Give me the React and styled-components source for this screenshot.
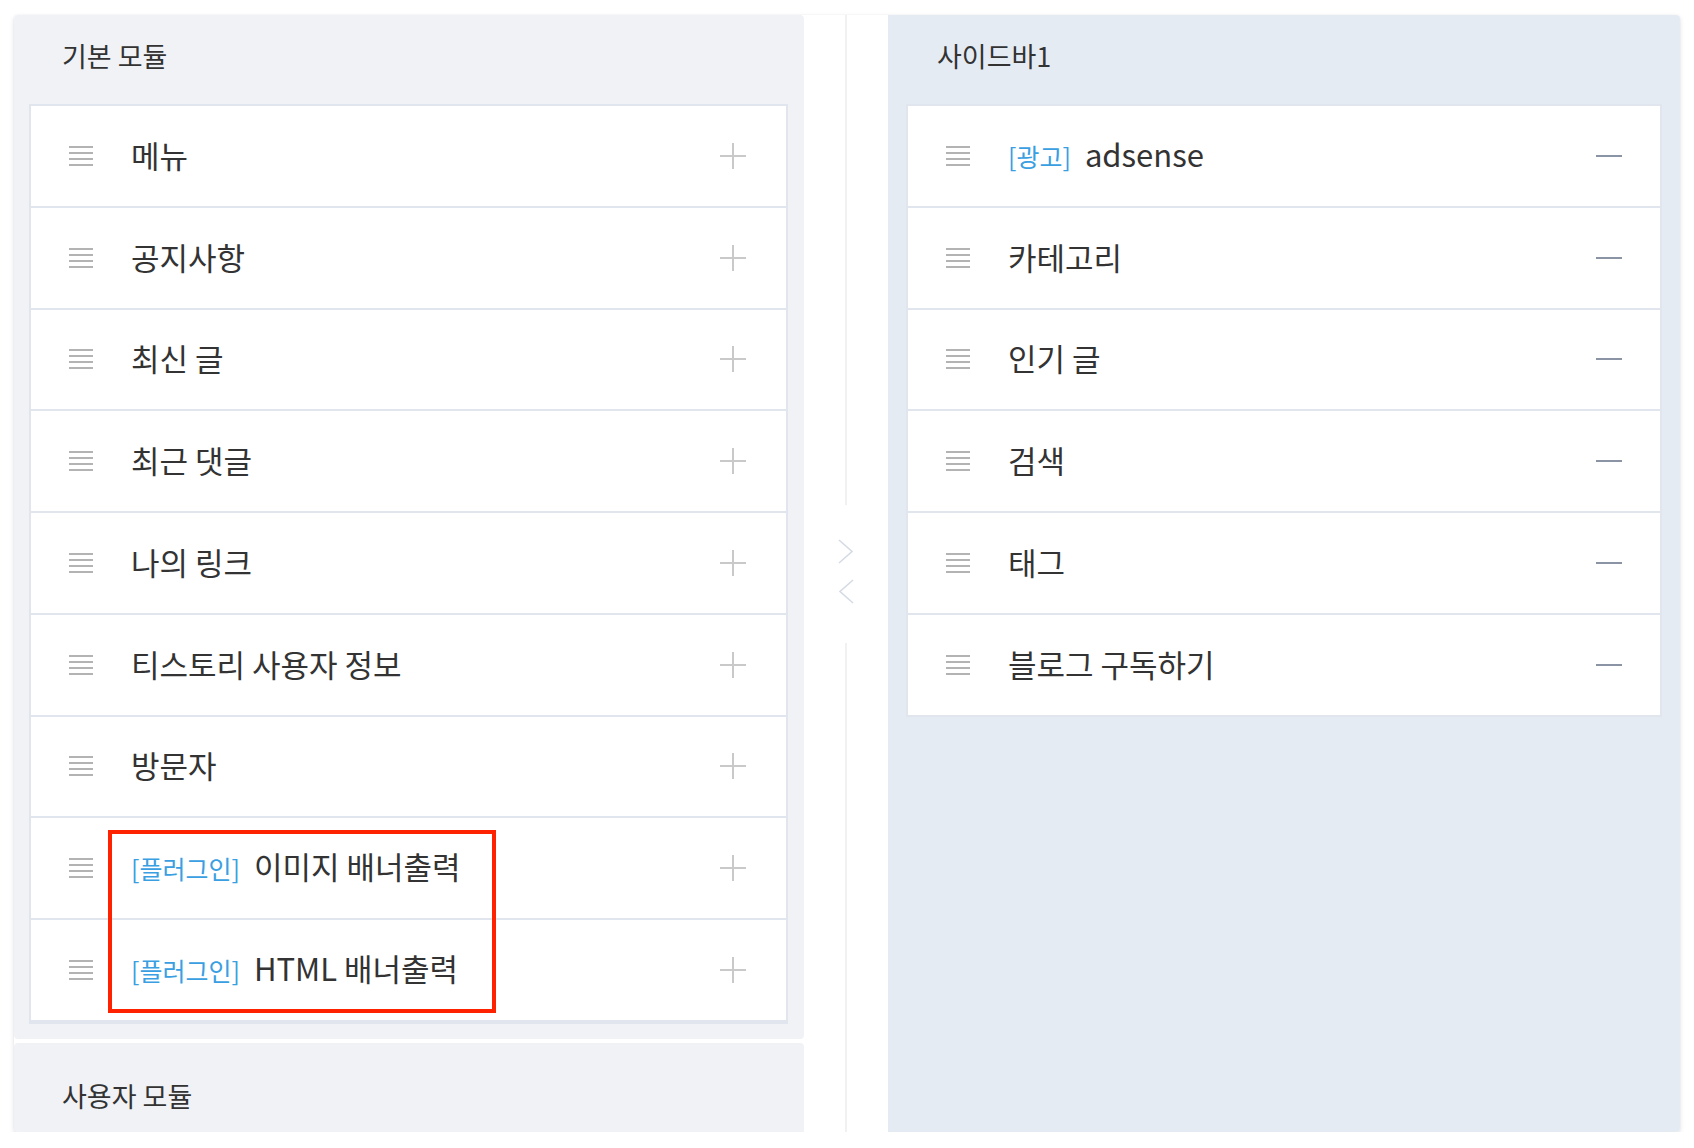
import React from 'react';
import styled, { createGlobalStyle } from 'styled-components';

const basicModules = [
  { label: '메뉴' },
  { label: '공지사항' },
  { label: '최신 글' },
  { label: '최근 댓글' },
  { label: '나의 링크' },
  { label: '티스토리 사용자 정보' },
  { label: '방문자' },
];

const pluginModules = [
  { tag: '플러그인', label: '이미지 배너출력' },
  { tag: '플러그인', label: 'HTML 배너출력' },
];

const sidebarModules = [
  { tag: '광고', label: 'adsense' },
  { label: '카테고리' },
  { label: '인기 글' },
  { label: '검색' },
  { label: '태그' },
  { label: '블로그 구독하기' },
];

const GripIcon = () => (
  <Grip width="24" height="20" viewBox="0 0 24 20">
    {[1, 7, 13, 19].map((y) => (
      <line key={y} x1="0" x2="24" y1={y} y2={y} stroke="#b3b3b3" strokeWidth="2" />
    ))}
  </Grip>
);

const PlusIcon = () => (
  <svg width="26" height="26" viewBox="0 0 26 26">
    <line x1="0" x2="26" y1="13" y2="13" stroke="#c9c9c9" strokeWidth="2" />
    <line x1="13" x2="13" y1="0" y2="26" stroke="#c9c9c9" strokeWidth="2" />
  </svg>
);

const MinusIcon = () => (
  <svg width="26" height="26" viewBox="0 0 26 26">
    <line x1="0" x2="26" y1="13" y2="13" stroke="#8a94a5" strokeWidth="2" />
  </svg>
);

const Row = ({ item, added }) => (
  <ModuleRow $added={added}>
    <GripIcon />
    <Label>
      {item.tag && <Tag>[{item.tag}]</Tag>}
      {item.label}
    </Label>
    <Action>{added ? <MinusIcon /> : <PlusIcon />}</Action>
  </ModuleRow>
);

const App = () => {
  return (
    <>
      <GlobalStyle />
      <Board>
        <LeftColumn>
          <Panel>
            <PanelTitle>기본 모듈</PanelTitle>
            <ModuleList>
              {basicModules.map((item) => (
                <Row key={item.label} item={item} />
              ))}
              <Highlighted>
                {pluginModules.map((item) => (
                  <Row key={item.label} item={item} />
                ))}
                <HighlightBox />
              </Highlighted>
            </ModuleList>
          </Panel>
          <Panel $grow>
            <PanelTitle $lower>사용자 모듈</PanelTitle>
          </Panel>
        </LeftColumn>

        <Gutter>
          <GutterLine />
          <Arrows>
            <svg width="16" height="25" viewBox="0 0 16 25">
              <polyline points="1,1 14,12.5 1,24" fill="none" stroke="#d4dbe5" strokeWidth="1.6" />
            </svg>
            <svg width="16" height="25" viewBox="0 0 16 25">
              <polyline points="15,1 2,12.5 15,24" fill="none" stroke="#d4dbe5" strokeWidth="1.6" />
            </svg>
          </Arrows>
          <GutterLine />
        </Gutter>

        <SidebarPanel>
          <PanelTitle $right>사이드바1</PanelTitle>
          <ModuleList>
            {sidebarModules.map((item) => (
              <Row key={item.label} item={item} added />
            ))}
          </ModuleList>
        </SidebarPanel>
      </Board>
    </>
  );
};

export default App;

const GlobalStyle = createGlobalStyle`
  body {
    margin: 0;
    background: #ffffff;
    font-family: 'Noto Sans CJK KR', 'Noto Sans', sans-serif;
    color: #333333;
  }
`;

const Board = styled.div`
  display: flex;
  width: 1666px;
  height: 1117px;
  margin: 15px 0 0 14px;
  overflow: hidden;
  border-radius: 4px;
  background: #ffffff;
  box-shadow: 0 2px 5px rgba(0, 0, 0, 0.12), 0 0 2px rgba(0, 0, 0, 0.06);
`;

const LeftColumn = styled.div`
  width: 790px;
  display: flex;
  flex-direction: column;
  gap: 4px;
  flex-shrink: 0;
`;

const Panel = styled.section`
  background-color: #f0f2f6;
  border-radius: 4px;
  padding: 0 16px 15px 15px;
  flex: ${(p) => (p.$grow ? '1' : 'none')};
`;

const PanelTitle = styled.h2`
  margin: 0;
  height: ${(p) => (p.$lower ? '108px' : '89px')};
  padding: ${(p) => (p.$lower ? '37px 0 0' : '25px 0 0')};
  padding-left: ${(p) => (p.$right ? '31px' : '33px')};
  box-sizing: border-box;
  font-size: 27px;
  line-height: 32px;
  font-weight: 400;
  color: #333333;
`;

const ModuleList = styled.div`
  background: #ffffff;
  border: 2px solid #e1e6ee;
  display: flex;
  flex-direction: column;
`;

const ModuleRow = styled.div`
  display: flex;
  align-items: center;
  height: 99.78px;
  padding: 0 ${(p) => (p.$added ? '38px' : '40px')} 0 38px;
  border-bottom: 2px solid #e1e6ee;

  &:last-child {
    border-bottom: none;
  }
`;

const Highlighted = styled.div`
  position: relative;
  display: flex;
  flex-direction: column;
`;

const HighlightBox = styled.div`
  position: absolute;
  left: 77px;
  top: 12px;
  width: 388px;
  height: 183px;
  box-sizing: border-box;
  border: 4px solid #ff2200;
  pointer-events: none;
`;

const Grip = styled.svg`
  flex-shrink: 0;
  margin-right: 38px;
`;

const Label = styled.span`
  flex: 1;
  font-size: 31px;
  line-height: 40px;
  margin-top: -2px;
  color: #333333;
  white-space: nowrap;
`;

const Tag = styled.span`
  font-size: 25px;
  color: #3a9fe2;
  margin-right: 14px;
`;

const Action = styled.span`
  display: flex;
  width: 26px;
  height: 26px;
`;

const Gutter = styled.div`
  width: 84px;
  flex-shrink: 0;
  display: flex;
  flex-direction: column;
  align-items: center;
`;

const GutterLine = styled.div`
  flex: 1;
  width: 2px;
  background: #f1f1f1;
`;

const Arrows = styled.div`
  display: flex;
  flex-direction: column;
  gap: 15px;
  margin-top: 13px;
  padding: 21px 0 39px;
`;

const SidebarPanel = styled.section`
  width: 792px;
  flex-shrink: 0;
  background-color: #e5ebf3;
  padding: 0 18px 0 18px;
  box-sizing: border-box;
`;
